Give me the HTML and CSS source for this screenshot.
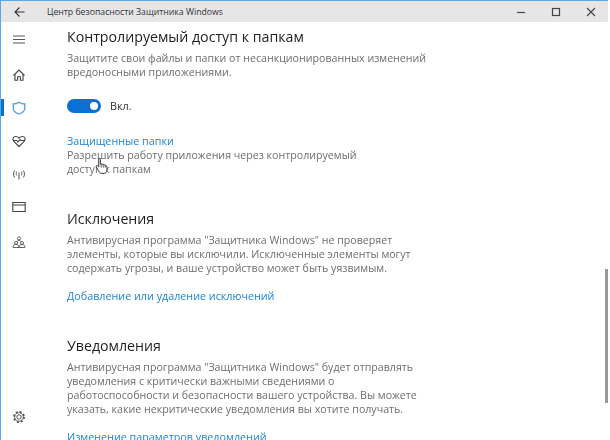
FILE: index.html
```html
<!DOCTYPE html>
<html lang="ru">
<head>
<meta charset="utf-8">
<title>Центр безопасности Защитника Windows</title>
<link rel="stylesheet" href="styles.css">
</head>
<body>
<div class="window">
  <header class="titlebar">
    <svg class="back" width="12" height="12" viewBox="0 0 12 12"><path d="M5.500 1.500 1 6l4.500 4.500M1 6h9.500" fill="none" stroke="#333" stroke-width="1.100"/></svg>
    <span class="title">Центр безопасности Защитника Windows</span>
    <div class="controls">
      <svg width="10" height="10" viewBox="0 0 10 10"><path d="M1 5.500h8" stroke="#444" stroke-width="1.200"/></svg>
      <svg width="10" height="10" viewBox="0 0 10 10"><rect x="1.500" y="1.500" width="7" height="7" fill="none" stroke="#444" stroke-width="1.200"/></svg>
      <svg width="10" height="10" viewBox="0 0 10 10"><path d="M1 1l8 8M9 1l-8 8" stroke="#444" stroke-width="1.100"/></svg>
    </div>
  </header>
  <div class="body">
    <nav class="sidebar">
      <div class="nav-top">
        <svg class="icon" viewBox="0 0 14 14"><path d="M1 3h12M1 6.500h12M1 10h12" fill="none" stroke="#555" stroke-width="1.100"/></svg>
        <svg class="icon icon-home" viewBox="0 0 14 14"><path d="M1.500 7.500 7 2l5.500 5.500M3 6.200v6h2.600V8.700h2.800v3.500H11v-6" fill="none" stroke="#444" stroke-width="1.100"/></svg>
        <div class="nav-active">
          <svg class="icon" viewBox="0 0 14 14"><path d="M7 1.200c1.800 1.300 3.700 1.800 5.800 1.800v4.200c0 2.700-2.500 4.800-5.800 5.800-3.300-1-5.800-3.100-5.800-5.800V3C3.300 3 5.200 2.500 7 1.200z" fill="none" stroke="#4b9fe8" stroke-width="1.300"/></svg>
        </div>
        <svg class="icon" viewBox="0 0 14 14"><path d="M7 12.500 1.800 7.300C.3 5.800.8 2.500 3.800 2.500 5.400 2.500 6.300 3.300 7 4.200 7.700 3.300 8.600 2.500 10.200 2.500c3 0 3.500 3.300 2 4.800zM1.500 6.500h3.300L6 8l2-2.500 1.200 1h3.300" fill="none" stroke="#444" stroke-width="1.100"/></svg>
        <svg class="icon" viewBox="0 0 14 14"><path d="M7 5.500v7M4.800 4.500c-.8 1.300-.8 2.700 0 4M9.200 4.500c.8 1.300.8 2.700 0 4M2.600 3.500c-1.400 2.200-1.400 4.800 0 7M11.400 3.500c1.400 2.200 1.400 4.800 0 7" fill="none" stroke="#555" stroke-width="1"/></svg>
        <svg class="icon" viewBox="0 0 14 14"><path d="M.8 2.500h12.400v9H.8zM.8 5h12.400" fill="none" stroke="#444" stroke-width="1.100"/></svg>
        <svg class="icon icon-people" viewBox="0 0 14 14"><path d="M5.400 3.400a1.600 1.600 0 1 1 3.200 0 1.600 1.600 0 1 1-3.200 0zM5.500 8a1.500 1.500 0 1 1-3 0 1.500 1.500 0 1 1 3 0zM11.500 8a1.500 1.500 0 1 1-3 0 1.500 1.500 0 1 1 3 0zM1 12.500c0-2 1-3 3-3s3 1 3 3zM7 12.500c0-2 1-3 3-3s3 1 3 3zM4.800 6.800c.5-.9 1.200-1.600 2.200-1.600s1.700.7 2.200 1.600" fill="none" stroke="#555" stroke-width=".9"/></svg>
      </div>
      <svg class="icon" viewBox="0 0 14 14"><circle cx="7" cy="7" r="2.200" fill="none" stroke="#555" stroke-width="1"/><circle cx="7" cy="7" r="5" fill="none" stroke="#555" stroke-width="1.900" stroke-dasharray="2 1.930"/><circle cx="7" cy="7" r="4.300" fill="none" stroke="#555" stroke-width=".8"/></svg>
    </nav>
    <main class="main">
      <section class="section first">
        <h2>Контролируемый доступ к папкам</h2>
        <p>Защитите свои файлы и папки от несанкционированных изменений<br>вредоносными приложениями.</p>
        <div class="toggle-row"><span class="toggle"><span class="knob"></span></span><span class="toggle-label">Вкл.</span></div>
        <a class="link">Защищенные папки</a>
        <p class="tight">Разрешить работу приложения через контролируемый<br>доступ к папкам</p>
      </section>
      <section class="section">
        <h2>Исключения</h2>
        <p>Антивирусная программа "Защитника Windows" не проверяет<br>элементы, которые вы исключили. Исключенные элементы могут<br>содержать угрозы, и ваше устройство может быть уязвимым.</p>
        <a class="link spaced">Добавление или удаление исключений</a>
      </section>
      <section class="section">
        <h2>Уведомления</h2>
        <p>Антивирусная программа "Защитника Windows" будет отправлять<br>уведомления с критически важными сведениями о<br>работоспособности и безопасности вашего устройства. Вы можете<br>указать, какие некритические уведомления вы хотите получать.</p>
        <a class="link spaced">Изменение параметров уведомлений</a>
      </section>
    </main>
  </div>
  <div class="scroll-thumb"></div>
  <svg class="cursor" width="14" height="18" viewBox="0 0 17 21"><path d="M4.500 1.500c1-.7 2 0 2 1v6l1-.5 1.500.3 1.300.3 1.700.6c1.500.6 2.500 1.200 2.500 3v3.300c0 2-1 3.500-3 4H7.500c-1.500-.5-2.500-2-3.500-3.500L1.500 11.500c-.5-1 .5-2 1.500-1.300l1.500 1.300z" fill="#fff" stroke="#222" stroke-width="1.100"/><path d="M7.500 8.500v4M10 8.500v4M12.500 9.500v3" stroke="#222" stroke-width=".9"/></svg>
</div>
</body>
</html>
```

FILE: styles.css
```css
* { box-sizing: border-box; }
html, body { margin: 0; padding: 0; background: #fff; }
body { width: 610px; height: 440px; overflow: hidden; font-family: "Open Sans", "Noto Sans", sans-serif; }
.window {
  position: relative; width: 608px; height: 440px; overflow: hidden;
  display: flex; flex-direction: column;
  border-top: 1px solid #5aa9e6; border-left: 1px solid #5aa9e6;
  filter: blur(0.45px);
}
.titlebar { flex: none; height: 21px; background: #e6e6e6; display: flex; align-items: center; padding-left: 13px; }
.back { flex: none; }
.title { margin-left: 21px; font-size: 8.700px; color: #333; white-space: nowrap; }
.controls { margin-left: auto; display: flex; gap: 25px; padding-right: 12px; }
.body { flex: 1; display: flex; min-height: 0; }
.sidebar { flex: none; width: 66px; padding: 11px 0 16px; display: flex; flex-direction: column; justify-content: space-between; align-items: flex-start; }
.nav-top { display: flex; flex-direction: column; gap: 19px; align-items: flex-start; }
.icon { display: block; width: 14px; height: 14px; margin-left: 11px; }
.icon-home { margin-top: 2px; }
.icon-people { margin-top: 2px; }
.nav-active { position: relative; }
.nav-active::before { content: ""; position: absolute; left: 0; top: -2px; width: 3px; height: 17px; background: #0a6fd0; }
.main { flex: 1; min-width: 0; padding-top: 5px; color: #6e6e6e; overflow: hidden; }
.section { margin-bottom: 33px; }
h2 { margin: 0 0 4px; font-size: 14.200px; line-height: 20px; font-weight: 400; color: #1f1f1f; white-space: nowrap; }
p { margin: 0; font-size: 10.650px; line-height: 14px; white-space: nowrap; }
.toggle-row { display: flex; align-items: center; gap: 9px; margin-top: 19px; margin-bottom: 21px; }
.toggle { width: 34px; height: 14px; border-radius: 7px; background: #0a70d6; display: flex; align-items: center; justify-content: flex-end; padding-right: 3px; }
.knob { width: 8px; height: 8px; border-radius: 50%; background: #fff; }
.toggle-label { font-size: 10.800px; color: #333; }
.link { display: block; font-size: 10.750px; line-height: 14px; color: #1a86d8; }
.spaced { margin-top: 14px; }
.scroll-thumb { position: absolute; left: 604px; top: 268px; width: 3px; height: 134px; background: #9a9a9a; }
.cursor { position: absolute; left: 94px; top: 156px; }
```
